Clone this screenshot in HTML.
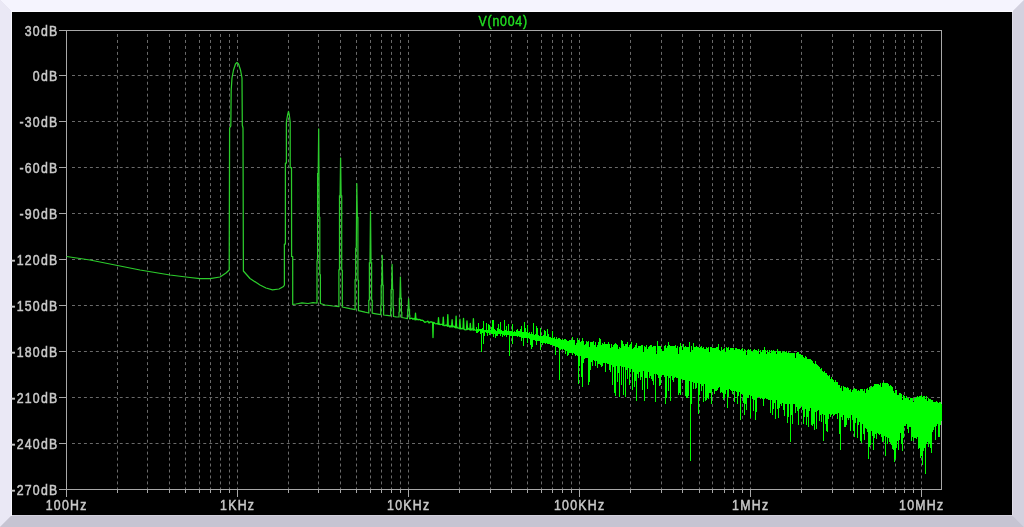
<!DOCTYPE html><html><head><meta charset="utf-8"><style>
html,body{margin:0;padding:0;background:#000;}
body{width:1024px;height:527px;overflow:hidden;position:relative;}
svg{position:absolute;left:0;top:0;display:block;will-change:transform;}
text{font-family:"Liberation Sans",sans-serif;font-size:14px;fill:#c8c8c8;stroke:#c8c8c8;stroke-width:0.5px;}
</style></head><body>
<svg width="1024" height="527" viewBox="0 0 1024 527">
<rect x="0" y="0" width="1024" height="527" fill="#dcdbe8"/>
<polygon points="0,0 1024,0 1012,12 12,12" fill="#f5f4fe"/>
<polygon points="0,0 12,12 12,515 0,527" fill="#eae8f5"/>
<polygon points="1024,0 1024,527 1012,515 1012,12" fill="#d3d1df"/>
<polygon points="0,527 12,515 1012,515 1024,527" fill="#c6c4d2"/>
<rect x="12" y="12" width="1000" height="503" fill="#000"/>
<rect x="11" y="11" width="1002" height="1" fill="#fbfbff"/>
<rect x="11" y="11" width="1" height="505" fill="#f6f6fc"/>
<rect x="1012" y="12" width="1" height="504" fill="#dedce8"/>
<rect x="12" y="515" width="1001" height="1" fill="#d3d1dd"/>
<path d="M72 75.5H941M72 121.5H941M72 167.5H941M72 213.5H941M72 259.5H941M72 305.5H941M72 351.5H941M72 397.5H941M72 443.5H941" stroke="#6a6a6a" stroke-width="1" stroke-dasharray="2.983 2.983" fill="none"/>
<path d="M117.5 34V489M147.5 34V489M169.5 34V489M185.5 34V489M199.5 34V489M210.5 34V489M220.5 34V489M229.5 34V489M237.5 34V489M288.5 34V489M318.5 34V489M340.5 34V489M356.5 34V489M370.5 34V489M381.5 34V489M391.5 34V489M400.5 34V489M408.5 34V489M459.5 34V489M490.5 34V489M511.5 34V489M527.5 34V489M541.5 34V489M552.5 34V489M562.5 34V489M571.5 34V489M579.5 34V489M630.5 34V489M661.5 34V489M682.5 34V489M699.5 34V489M712.5 34V489M724.5 34V489M733.5 34V489M742.5 34V489M750.5 34V489M801.5 34V489M832.5 34V489M853.5 34V489M870.5 34V489M883.5 34V489M895.5 34V489M904.5 34V489M913.5 34V489M921.5 34V489" stroke="#6a6a6a" stroke-width="1" stroke-dasharray="2.983 2.983" fill="none"/>
<path d="M66.8 30.5H941.5V489.5H66.8ZM59 30.5H66M59 75.5H66M59 121.5H66M59 167.5H66M59 213.5H66M59 259.5H66M59 305.5H66M59 351.5H66M59 397.5H66M59 443.5H66M59 489.5H66M66.5 490V497M237.5 490V497M408.5 490V497M579.5 490V497M750.5 490V497M921.5 490V497M117.5 490V493M147.5 490V493M169.5 490V493M185.5 490V493M199.5 490V493M210.5 490V493M220.5 490V493M229.5 490V493M288.5 490V493M318.5 490V493M340.5 490V493M356.5 490V493M370.5 490V493M381.5 490V493M391.5 490V493M400.5 490V493M459.5 490V493M490.5 490V493M511.5 490V493M527.5 490V493M541.5 490V493M552.5 490V493M562.5 490V493M571.5 490V493M630.5 490V493M661.5 490V493M682.5 490V493M699.5 490V493M712.5 490V493M724.5 490V493M733.5 490V493M742.5 490V493M801.5 490V493M832.5 490V493M853.5 490V493M870.5 490V493M883.5 490V493M895.5 490V493M904.5 490V493M913.5 490V493" stroke="#a8a8a8" stroke-width="1" fill="none" shape-rendering="crispEdges"/>
<text transform="translate(58.60 35.80) scale(0.88 1)" text-anchor="end" letter-spacing="1.45">30dB</text>
<text transform="translate(58.60 80.80) scale(0.88 1)" text-anchor="end" letter-spacing="1.45">0dB</text>
<text transform="translate(58.60 126.80) scale(0.88 1)" text-anchor="end" letter-spacing="1.45">-30dB</text>
<text transform="translate(58.60 172.80) scale(0.88 1)" text-anchor="end" letter-spacing="1.45">-60dB</text>
<text transform="translate(58.60 218.80) scale(0.88 1)" text-anchor="end" letter-spacing="1.45">-90dB</text>
<text transform="translate(58.60 264.80) scale(0.88 1)" text-anchor="end" letter-spacing="1.45">-120dB</text>
<text transform="translate(58.60 310.80) scale(0.88 1)" text-anchor="end" letter-spacing="1.45">-150dB</text>
<text transform="translate(58.60 356.80) scale(0.88 1)" text-anchor="end" letter-spacing="1.45">-180dB</text>
<text transform="translate(58.60 402.80) scale(0.88 1)" text-anchor="end" letter-spacing="1.45">-210dB</text>
<text transform="translate(58.60 448.80) scale(0.88 1)" text-anchor="end" letter-spacing="1.45">-240dB</text>
<text transform="translate(58.60 494.80) scale(0.88 1)" text-anchor="end" letter-spacing="1.45">-270dB</text>
<text transform="translate(66.70 510) scale(0.88 1)" text-anchor="middle" letter-spacing="1.45">100Hz</text>
<text transform="translate(237.70 510) scale(0.88 1)" text-anchor="middle" letter-spacing="1.45">1KHz</text>
<text transform="translate(408.70 510) scale(0.88 1)" text-anchor="middle" letter-spacing="1.45">10KHz</text>
<text transform="translate(579.70 510) scale(0.88 1)" text-anchor="middle" letter-spacing="1.45">100KHz</text>
<text transform="translate(750.70 510) scale(0.88 1)" text-anchor="middle" letter-spacing="1.45">1MHz</text>
<text transform="translate(921.70 510) scale(0.88 1)" text-anchor="middle" letter-spacing="1.45">10MHz</text>
<text transform="translate(503.2 25.6) scale(0.88 1)" text-anchor="middle" letter-spacing="0.90" style="fill:#22e022;stroke:#22e022;stroke-width:0.4px">V(n004)</text>
<path d="M66.5 256.5 L90.0 260.0 L117.5 265.5 L140.0 270.0 L170.0 275.0 L190.0 277.5 L200.0 278.6 L210.0 278.6 L220.0 277.0 L226.0 273.0 L229.2 270.0 L229.6 128.0 L230.8 126.0 L231.2 90.0 L232.0 78.0 L233.5 70.0 L235.5 64.0 L237.0 62.5 L238.5 64.0 L240.5 70.0 L242.0 78.0 L242.3 125.0 L243.0 128.0 L243.4 271.0 L250.0 278.5 L260.0 285.0 L266.0 288.0 L272.5 289.8 L279.0 289.0 L283.5 286.5 L284.4 285.0 L284.4 244.0 L285.4 244.0 L285.4 163.0 L286.4 163.0 L286.4 122.0 L287.6 115.0 L288.5 111.3 L289.3 115.0 L290.2 122.0 L290.2 167.6 L291.5 167.6 L291.6 256.4 L292.7 256.6 L292.7 304.4 L296.0 304.0 L302.0 302.8 L308.0 303.5 L313.0 302.6 L316.6 303.0 L317.0 303.0 L317.0 260.5 L317.6 260.5 L317.6 173.4 L318.2 173.4 L318.7 128.9 L319.2 217.2 L319.8 217.2 L319.8 274.5 L320.4 274.5 L320.4 303.5 L325.0 305.0 L333.0 306.0 L338.9 306.6 L338.9 269.7 L339.5 269.7 L339.5 195.6 L340.1 195.6 L340.6 158.0 L341.1 195.6 L341.7 195.6 L341.7 270.0 L342.3 270.0 L342.3 307.0 L350.0 308.7 L355.1 309.6 L355.1 279.6 L355.7 279.6 L355.7 248.0 L356.3 248.0 L356.8 183.6 L357.3 217.0 L357.9 217.0 L357.9 280.0 L358.5 280.0 L358.5 310.6 L365.0 312.2 L368.8 313.0 L368.8 300.0 L369.4 300.0 L369.4 262.5 L370.0 262.5 L370.5 211.5 L371.0 262.5 L371.6 262.5 L371.6 300.0 L372.2 300.0 L372.2 313.1 L376.0 313.8 L380.8 314.6 L380.8 305.0 L381.2 305.0 L381.2 285.0 L381.7 285.0 L382.2 255.4 L382.7 285.0 L383.2 285.0 L383.2 305.0 L383.6 305.0 L383.6 315.0 L387.0 315.4 L390.7 315.8 L390.7 308.0 L391.1 308.0 L391.1 289.6 L391.6 289.6 L392.1 264.4 L392.6 289.6 L393.1 289.6 L393.1 308.0 L393.5 308.0 L393.5 316.5 L396.0 316.8 L399.0 317.0 L399.0 312.0 L399.4 312.0 L399.4 298.0 L399.9 298.0 L400.4 277.0 L400.9 298.0 L401.4 298.0 L401.4 312.0 L401.8 312.0 L401.8 317.5 L404.5 318.0 L407.4 318.6 L407.4 315.0 L407.7 315.0 L407.7 309.0 L408.1 309.0 L408.6 298.7 L409.1 309.0 L409.5 309.0 L409.5 315.0 L409.8 315.0 L409.8 319.0" stroke="#2ccc2c" stroke-width="1.25" fill="none" stroke-linejoin="round"/>
<path d="M409.1 319.0 L411.0 318.3 L412.0 318.1 L413.0 319.3 L414.0 318.4 L415.0 319.5 L415.0 319.8 L415.5 313.2 L416.0 319.8 L416.0 319.7 L417.0 318.9 L418.0 319.9 L419.0 319.4 L420.0 319.6 L421.0 320.5 L422.0 320.1 L423.0 320.5 L424.0 321.5 L425.0 322.4 L426.0 321.8 L427.0 321.7 L428.0 321.2 L429.0 323.0 L430.0 322.0 L431.0 321.9 L432.0 322.0 L432.6 322.6 L433.0 337.5 L433.4 322.6 L433.0 322.6 L434.0 322.5 L435.0 323.5 L436.0 323.8 L437.0 323.5 L438.0 324.0 L438.0 324.3 L438.5 317.7 L439.0 324.3 L439.0 323.5 L440.0 324.7 L441.0 324.3 L442.0 324.3 L443.0 325.1 L442.8 325.2 L443.3 317.1 L443.8 325.2 L444.0 325.7 L445.0 325.7 L446.0 324.9 L447.0 325.8 L447.3 326.1 L447.8 314.6 L448.3 326.1 L448.0 326.3 L449.0 325.6 L450.0 327.2 L451.0 325.7 L452.0 326.5 L451.6 326.9 L452.1 319.7 L452.6 326.9 L453.0 326.8 L454.0 326.1 L455.0 327.5 L456.0 327.9 L455.6 327.7 L456.1 316.1 L456.6 327.7 L457.0 327.1 L458.0 328.1 L459.0 328.0 L459.4 328.3 L459.9 319.2 L460.4 328.3 L460.0 328.7 L461.0 329.0 L462.0 328.3 L463.0 328.8 L463.0 328.9 L463.5 318.4 L464.0 328.9 L464.0 328.9 L465.0 329.8 L466.0 329.6 L466.5 329.4 L467.0 320.8 L467.5 329.4 L467.0 329.5 L468.0 328.3 L469.0 329.4 L470.0 328.9 L469.8 329.9 L470.3 323.3 L470.8 329.9 L471.0 330.2 L472.0 329.0 L473.0 329.4 L472.9 330.2 L473.4 318.7 L473.9 330.2 L474.0 329.1 L475.0 330.0 L476.0 330.3" stroke="#1ee61e" stroke-width="1.3" fill="none" stroke-linejoin="round"/>
<path d="M476.5 327.4V332.6M477.5 329.0V332.8M478.5 322.7V331.5M479.5 328.8V331.4M480.5 329.3V333.9M481.5 329.1V352.4M482.5 328.4V333.0M483.5 320.6V344.4M484.5 329.8V336.1M485.5 330.0V332.1M486.5 323.1V332.6M487.5 330.1V336.4M488.5 324.1V332.8M489.5 324.7V335.0M490.5 330.2V332.8M491.5 326.6V333.8M492.5 320.4V333.6M493.5 320.2V336.5M494.5 329.0V334.3M495.5 330.0V338.3M496.5 330.5V336.0M497.5 328.0V336.1M498.5 324.2V333.9M499.5 328.6V334.4M500.5 321.5V335.9M501.5 329.7V334.3M502.5 330.7V337.1M503.5 330.6V335.3M504.5 320.3V335.7M505.5 329.5V335.4M506.5 325.7V337.4M507.5 330.6V335.2M508.5 324.4V335.1M509.5 330.6V355.8M510.5 331.1V335.7M511.5 331.0V335.7M512.5 323.5V343.8M513.5 331.5V336.3M514.5 331.3V336.0M515.5 331.6V335.7M516.5 330.3V336.3M517.5 329.4V336.5M518.5 331.2V336.3M519.5 331.3V336.9M520.5 329.1V336.7M521.5 326.0V341.0M522.5 332.3V337.8M523.5 332.4V346.0M524.5 321.6V337.5M525.5 328.4V337.5M526.5 332.4V337.8M527.5 324.5V343.3M528.5 332.6V338.3M529.5 332.2V338.6M530.5 333.9V344.7M531.5 331.7V348.5M532.5 333.5V347.2M533.5 323.4V340.4M534.5 334.6V339.9M535.5 334.3V340.8M536.5 326.4V344.6M537.5 327.9V341.0M538.5 335.2V341.2M539.5 335.7V341.3M540.5 327.5V350.3M541.5 335.5V343.3M542.5 335.6V345.3M543.5 334.7V343.2M544.5 330.4V342.7M545.5 330.9V344.4M546.5 335.9V343.4M547.5 329.1V343.7M548.5 333.8V344.0M549.5 337.3V344.1M550.5 337.2V344.5M551.5 338.0V344.7M552.5 330.9V345.1M553.5 337.7V346.0M554.5 336.5V345.8M555.5 338.6V354.6M556.5 336.8V347.1M557.5 338.9V347.0M558.5 337.5V347.5M559.5 338.1V380.0M560.5 339.0V349.5M561.5 340.0V349.3M562.5 338.5V349.9M563.5 339.8V349.0M564.5 339.1V349.7M565.5 339.1V353.7M566.5 339.6V351.4M567.5 340.5V356.1M568.5 341.2V355.4M569.5 339.6V352.7M570.5 339.7V352.5M571.5 339.5V352.5M572.5 336.5V354.6M573.5 340.4V353.4M574.5 339.9V353.7M575.5 344.5V356.0M576.5 343.2V354.6M577.5 338.2V355.6M578.5 340.4V384.0M579.5 339.9V365.8M580.5 342.0V356.4M581.5 340.9V376.8M582.5 338.4V387.2M583.5 340.7V363.4M584.5 345.3V359.2M585.5 344.3V358.4M586.5 340.6V358.4M587.5 342.2V357.9M588.5 340.9V384.9M589.5 346.7V381.5M590.5 341.6V369.5M591.5 342.0V362.2M592.5 342.0V365.8M593.5 341.2V359.9M594.5 344.7V360.5M595.5 342.4V366.2M596.5 346.8V361.3M597.5 344.6V367.7M598.5 342.4V363.5M599.5 338.0V364.3M600.5 339.0V365.2M601.5 344.8V366.9M602.5 343.0V366.1M603.5 343.6V363.0M604.5 342.1V362.8M605.5 343.7V372.1M606.5 344.1V363.0M607.5 343.6V363.6M608.5 342.4V364.4M609.5 344.1V369.9M610.5 347.7V372.4M611.5 344.4V364.7M612.5 346.8V384.8M613.5 344.5V367.2M614.5 343.9V393.2M615.5 343.3V396.0M616.5 344.0V365.6M617.5 344.7V381.7M618.5 348.9V373.3M619.5 346.8V397.0M620.5 347.5V366.3M621.5 339.7V384.8M622.5 341.0V367.1M623.5 343.6V395.0M624.5 346.2V366.9M625.5 344.2V396.9M626.5 343.6V370.1M627.5 341.9V378.9M628.5 347.4V368.2M629.5 345.3V385.3M630.5 343.8V372.4M631.5 341.7V369.4M632.5 348.9V390.3M633.5 348.2V371.6M634.5 346.9V387.2M635.5 344.9V381.0M636.5 342.6V400.8M637.5 347.7V374.4M638.5 345.5V378.1M639.5 346.0V372.4M640.5 346.2V380.2M641.5 345.3V376.9M642.5 344.8V390.3M643.5 352.4V371.1M644.5 346.3V401.0M645.5 347.4V378.3M646.5 344.9V378.3M647.5 348.9V388.6M648.5 347.1V371.8M649.5 346.3V378.2M650.5 345.2V376.1M651.5 345.4V378.6M652.5 347.3V381.1M653.5 346.1V384.9M654.5 345.7V373.6M655.5 345.5V402.3M656.5 354.0V373.7M657.5 340.7V374.6M658.5 345.8V377.8M659.5 346.3V385.5M660.5 345.7V384.5M661.5 349.2V375.6M662.5 350.5V374.7M663.5 351.0V374.7M664.5 345.9V376.9M665.5 345.4V403.9M666.5 348.0V397.6M667.5 345.9V376.0M668.5 342.0V390.5M669.5 345.4V377.6M670.5 345.8V401.2M671.5 346.2V376.3M672.5 346.4V379.6M673.5 346.3V382.4M674.5 346.3V378.2M675.5 345.4V377.4M676.5 347.8V377.5M677.5 346.2V378.0M678.5 354.3V395.3M679.5 346.6V393.0M680.5 343.0V394.8M681.5 346.1V379.0M682.5 349.6V379.7M683.5 343.5V379.6M684.5 347.4V379.9M685.5 345.8V396.1M686.5 347.0V398.1M687.5 347.3V398.4M688.5 347.1V396.0M689.5 341.8V381.4M690.5 352.4V461.0M691.5 345.9V403.5M692.5 349.5V382.1M693.5 343.3V389.0M694.5 347.3V382.6M695.5 346.9V388.5M696.5 346.1V387.7M697.5 346.8V382.8M698.5 347.3V413.7M699.5 348.2V395.2M700.5 346.9V383.6M701.5 346.1V390.6M702.5 347.7V386.4M703.5 346.5V401.7M704.5 348.7V384.2M705.5 348.5V400.9M706.5 346.5V400.3M707.5 348.3V397.5M708.5 347.3V399.1M709.5 351.8V393.3M710.5 346.9V393.1M711.5 347.2V404.1M712.5 348.2V388.7M713.5 347.6V389.2M714.5 347.6V393.6M715.5 348.3V390.8M716.5 346.9V391.1M717.5 346.8V389.6M718.5 343.5V388.2M719.5 349.6V387.4M720.5 350.8V393.3M721.5 347.0V392.3M722.5 349.8V393.4M723.5 349.3V400.4M724.5 347.5V397.6M725.5 352.4V393.8M726.5 347.2V390.3M727.5 347.9V407.6M728.5 347.4V396.6M729.5 349.6V389.4M730.5 348.4V390.2M731.5 348.1V390.7M732.5 348.0V393.6M733.5 347.7V390.6M734.5 349.5V401.7M735.5 348.4V391.1M736.5 347.7V392.0M737.5 348.8V403.5M738.5 349.0V395.7M739.5 348.5V392.3M740.5 349.6V419.5M741.5 349.3V394.2M742.5 348.4V393.6M743.5 351.0V402.7M744.5 349.3V414.6M745.5 350.2V404.2M746.5 354.8V409.5M747.5 349.9V398.4M748.5 349.1V397.6M749.5 349.9V394.7M750.5 349.2V418.0M751.5 350.7V395.5M752.5 351.9V398.6M753.5 350.4V410.5M754.5 348.8V400.0M755.5 350.3V420.0M756.5 349.7V411.6M757.5 351.3V398.0M758.5 349.0V396.7M759.5 353.6V396.7M760.5 350.4V398.8M761.5 352.0V398.4M762.5 349.6V398.5M763.5 349.6V406.2M764.5 346.7V399.1M765.5 350.2V398.4M766.5 354.1V398.6M767.5 350.4V398.5M768.5 352.4V400.2M769.5 350.2V399.8M770.5 352.6V412.5M771.5 350.2V400.2M772.5 350.5V414.8M773.5 350.1V408.7M774.5 351.2V402.5M775.5 351.0V418.6M776.5 354.1V400.3M777.5 348.9V409.2M778.5 351.0V418.3M779.5 351.3V407.5M780.5 351.0V403.5M781.5 352.5V405.5M782.5 351.2V403.4M783.5 351.9V409.5M784.5 351.3V416.4M785.5 352.2V404.0M786.5 351.2V403.8M787.5 353.1V423.4M788.5 351.5V417.2M789.5 353.3V403.7M790.5 352.7V442.0M791.5 353.3V415.4M792.5 353.0V423.5M793.5 353.2V404.3M794.5 352.8V404.4M795.5 357.9V413.3M796.5 352.7V406.9M797.5 352.3V410.5M798.5 352.4V424.8M799.5 353.9V409.1M800.5 354.0V407.6M801.5 354.6V405.5M802.5 354.8V409.7M803.5 356.9V424.0M804.5 357.6V417.0M805.5 356.4V408.7M806.5 356.6V424.5M807.5 358.5V417.2M808.5 359.3V426.8M809.5 358.7V411.2M810.5 359.2V407.6M811.5 360.0V424.5M812.5 360.9V425.8M813.5 363.2V423.5M814.5 363.8V429.9M815.5 361.0V412.0M816.5 363.5V428.7M817.5 365.2V410.9M818.5 365.9V410.3M819.5 366.5V421.1M820.5 369.1V415.1M821.5 368.0V421.7M822.5 371.1V413.9M823.5 372.0V441.2M824.5 370.7V414.5M825.5 373.4V423.7M826.5 373.1V431.4M827.5 375.1V432.0M828.5 375.9V418.6M829.5 375.4V414.0M830.5 379.3V416.5M831.5 376.8V414.9M832.5 379.3V414.1M833.5 380.2V416.2M834.5 382.3V415.3M835.5 380.2V413.7M836.5 381.6V414.4M837.5 382.2V418.6M838.5 384.6V413.0M839.5 384.7V434.0M840.5 388.2V450.0M841.5 386.1V416.5M842.5 390.8V419.6M843.5 385.9V414.9M844.5 387.0V427.4M845.5 387.1V427.0M846.5 388.1V425.1M847.5 387.0V417.9M848.5 387.5V420.3M849.5 390.2V418.1M850.5 389.2V431.3M851.5 392.2V414.9M852.5 390.3V420.2M853.5 389.1V431.2M854.5 388.2V436.7M855.5 388.6V423.0M856.5 388.5V418.3M857.5 391.3V437.8M858.5 389.5V425.0M859.5 390.5V421.5M860.5 389.1V441.1M861.5 389.3V443.3M862.5 389.0V424.2M863.5 390.6V433.6M864.5 389.3V440.1M865.5 393.1V428.0M866.5 388.5V428.5M867.5 387.8V432.0M868.5 390.0V458.7M869.5 386.9V446.9M870.5 387.9V444.5M871.5 386.3V430.7M872.5 386.6V435.7M873.5 386.1V449.6M874.5 384.4V437.5M875.5 383.6V433.9M876.5 383.8V439.3M877.5 383.8V432.9M878.5 383.8V433.7M879.5 385.3V434.9M880.5 383.2V434.4M881.5 387.1V436.9M882.5 383.2V442.4M883.5 381.9V441.4M884.5 383.4V436.1M885.5 382.6V456.2M886.5 383.0V437.4M887.5 383.0V443.5M888.5 384.2V437.5M889.5 385.8V442.2M890.5 385.3V442.5M891.5 386.2V445.3M892.5 386.9V448.9M893.5 391.0V450.3M894.5 393.1V461.7M895.5 389.5V459.1M896.5 389.7V447.5M897.5 394.9V440.5M898.5 394.7V450.3M899.5 392.6V440.4M900.5 393.3V432.9M901.5 394.2V444.4M902.5 399.5V450.9M903.5 395.1V438.1M904.5 395.7V425.6M905.5 398.4V426.4M906.5 396.2V424.3M907.5 397.7V429.0M908.5 397.6V432.9M909.5 400.0V426.6M910.5 397.7V426.9M911.5 397.8V440.6M912.5 398.0V437.1M913.5 402.0V440.9M914.5 398.4V437.9M915.5 397.5V437.9M916.5 397.0V439.1M917.5 395.9V437.0M918.5 396.8V449.2M919.5 396.0V447.9M920.5 395.6V458.0M921.5 395.1V456.3M922.5 397.3V464.5M923.5 395.8V451.4M924.5 395.7V447.6M925.5 398.9V474.3M926.5 396.3V444.2M927.5 400.7V441.7M928.5 398.2V447.4M929.5 398.9V444.2M930.5 399.0V447.8M931.5 399.5V452.8M932.5 400.1V431.6M933.5 401.7V429.8M934.5 402.2V427.4M935.5 401.7V439.7M936.5 401.2V425.6M937.5 401.8V424.0M938.5 402.6V437.4M939.5 401.7V437.4M940.5 402.1V425.3M941.5 404.3V420.6" stroke="#00ff00" stroke-width="1" fill="none" shape-rendering="crispEdges"/>
</svg></body></html>
